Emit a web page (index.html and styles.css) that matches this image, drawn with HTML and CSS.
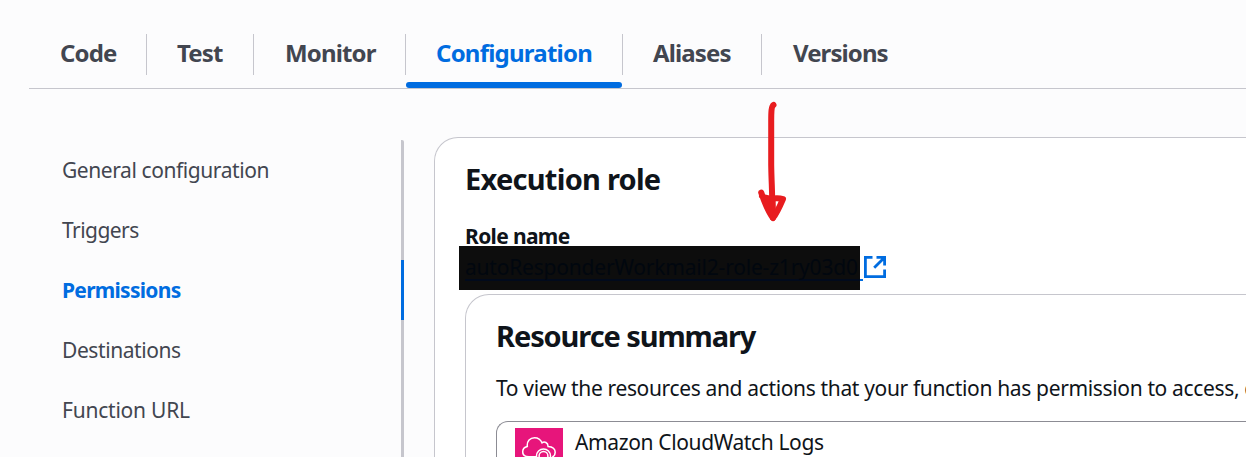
FILE: index.html
```html
<!DOCTYPE html>
<html lang="en">
<head>
<meta charset="utf-8">
<title>Function configuration</title>
<link rel="stylesheet" href="styles.css">
</head>
<body>
<nav class="tabs">
  <a class="tab tab-code"><span>Code</span></a>
  <a class="tab tab-test"><span>Test</span></a>
  <a class="tab tab-monitor"><span>Monitor</span></a>
  <a class="tab tab-config active"><span>Configuration</span></a>
  <a class="tab tab-aliases"><span>Aliases</span></a>
  <a class="tab tab-versions"><span>Versions</span></a>
</nav>
<div class="layout">
  <aside class="sidebar">
    <a class="side-item s-general"><span>General configuration</span></a>
    <a class="side-item s-triggers"><span>Triggers</span></a>
    <a class="side-item s-permissions selected"><span>Permissions</span></a>
    <a class="side-item s-destinations"><span>Destinations</span></a>
    <a class="side-item s-url"><span>Function URL</span></a>
    <a class="side-item side-rest"></a>
  </aside>
  <main class="card">
    <h2 class="title t-role"><span>Execution role</span></h2>
    <div class="label"><span>Role name</span></div>
    <div class="role-row">
      <a class="redacted"><span class="role-link">autoResponderWorkmail2-role-z1ry03d0</span></a>
      <svg class="external" width="24" height="24" viewBox="0 0 24 24" fill="none" stroke="#006ce0" stroke-width="2.8"><path d="M9.5 2.4H2.4V21.6H21.6V14.5M13.5 2.4H21.6V10.5M21 3L11.2 12.8"/></svg>
    </div>
    <section class="summary">
      <h2 class="title t-summary"><span>Resource summary</span></h2>
      <p class="desc">To view the resources and actions that your function has permission to access, c</p>
      <div class="select">
        <svg class="service" width="48" height="29" viewBox="0 0 48 29"><path fill="#e7157b" d="M0 0h48v29H0z"/><g fill="none" stroke="#fff" stroke-width="1.5"><path d="M21 28.7H14C10 28.7 7.7 26.5 7.7 23.7C7.7 21 9.7 19 12.3 18.4C11.7 13.2 15.2 9.7 19.5 9.7C23.2 9.7 25.8 11.8 27 14.8C29.5 12.9 33 14.6 33.1 18.5C37.2 18.8 40.2 21 40.2 24.3C40.2 26.6 39 28.3 37.3 29"/><circle cx="28.5" cy="28" r="7"/><circle cx="28.5" cy="28" r="4.4"/></g></svg>
        <span class="service-name">Amazon CloudWatch Logs</span>
      </div>
    </section>
  </main>
</div>
<svg class="arrow" width="50" height="130" viewBox="750 95 50 130" fill="none" stroke="#e81c1f" stroke-width="6" stroke-linecap="round" stroke-linejoin="round"><path d="M773.5 105C771.4 106.4 771.2 112 771.2 121V165C771.5 184 772.5 193 772.3 214"/><path fill="#e81c1f" d="M761.2 192.5C764 201 767 210 773 218L772.5 198.5C768 198.5 765 198 762 196"/><path d="M773 218C777 213 780 206 783 199C780 198 776 198 772 198.5"/></svg>
</body>
</html>
```
FILE: styles.css
```css
* { box-sizing: border-box; }
body {
  display: flex;
  flex-direction: column;
  margin: 0;
  width: 1246px;
  height: 457px;
  overflow: hidden;
  background: #fcfcfd;
  color: #0f141a;
  font-family: "Noto Sans", "Open Sans", sans-serif;
  font-size: 21px;
  white-space: nowrap;
}
.tabs {
  display: flex;
  flex: none;
  height: 89px;
  margin-left: 29px;
  padding-top: 34px;
  border-bottom: 1px solid #c6c6cd;
}
.tab {
  position: relative;
  height: 41px;
  padding-left: 31px;
  border-right: 1px solid #c6c6cd;
  color: #424650;
  font-size: 24px;
  font-weight: 700;
  line-height: 38px;
  letter-spacing: -0.86px;
}
.tab-code { width: 118px; }
.tab-test { width: 107px; padding-left: 30px; }
.tab-monitor { width: 152px; }
.tab-config { width: 217px; padding-left: 30px; letter-spacing: -0.77px; }
.tab-aliases { width: 139px; padding-left: 30px; }
.tab-versions { width: 160px; border-right: 0; letter-spacing: -0.92px; }
.tab.active { color: #006ce0; }
.tab.active::after {
  content: "";
  position: absolute;
  left: 0;
  right: 0;
  top: 48px;
  height: 6px;
  border-radius: 3px;
  background: #006ce0;
}
.layout { display: flex; flex: 1; min-height: 0; }
.sidebar {
  display: flex;
  flex-direction: column;
  flex: none;
  width: 375px;
  margin: 51px 0 0 29px;
  color: #424650;
}
.side-item {
  flex: none;
  height: 60px;
  padding-left: 33px;
  border-right: 3px solid #c6c6cd;
  line-height: 60px;
}
.side-rest { flex: 1; height: auto; }
.s-general { border-top-right-radius: 2px; letter-spacing: -0.42px; }
.s-triggers { letter-spacing: -0.55px; }
.s-destinations { letter-spacing: -0.42px; }
.s-url { letter-spacing: -0.22px; }
.side-item.selected {
  border-color: #006ce0;
  color: #006ce0;
  font-weight: 700;
  letter-spacing: -0.72px;
}
.card {
  display: flex;
  flex-direction: column;
  flex: 1;
  min-width: 0;
  margin: 48px 0 0 30px;
  padding: 23px 0 0 30px;
  border: 1px solid #c6c6cd;
  border-width: 1px 0 0 1px;
  border-top-left-radius: 24px;
  background: #fff;
}
.title {
  flex: none;
  margin: 0;
  font-size: 29px;
  font-weight: 700;
  line-height: 36px;
}
.t-role { letter-spacing: -0.74px; }
.t-summary { letter-spacing: -1.1px; }
.label {
  flex: none;
  margin-top: 25px;
  height: 24px;
  font-weight: 700;
  line-height: 29px;
  letter-spacing: -0.65px;
}
.role-row { display: flex; flex: none; height: 44px; margin-left: -6px; }
.redacted {
  position: relative;
  width: 401px;
  height: 44px;
  padding: 6px 0 0 6px;
  background: #0d0d0d;
  color: #01070f;
  line-height: 30px;
  letter-spacing: -0.2px;
}
.role-link {
  display: block;
  width: 395px;
  height: 29px;
  border-bottom: 2px solid #010a1c;
}
.redacted::after {
  content: "";
  position: absolute;
  left: 401px;
  top: 33px;
  width: 3px;
  height: 2px;
  background: #006ce0;
}
.external { margin: 9px 0 0 3px; }
.summary {
  display: flex;
  flex-direction: column;
  flex: 1;
  min-height: 0;
  margin-top: 4px;
  padding: 23px 0 0 30px;
  border: 1px solid #c6c6cd;
  border-width: 1px 0 0 1px;
  border-top-left-radius: 24px;
}
.desc { flex: none; margin: 19px 0 0; line-height: 30px; letter-spacing: -0.35px; }
.select {
  display: flex;
  flex: 1;
  min-height: 0;
  margin-top: 18px;
  padding: 6px 0 0 18px;
  border: 1px solid #8c8c94;
  border-width: 1px 0 0 1px;
  border-top-left-radius: 12px;
}
.service { flex: none; margin-right: 12px; }
.service-name { height: 29px; line-height: 29px; letter-spacing: -0.37px; }
.arrow { position: absolute; left: 750px; top: 95px; }
```
